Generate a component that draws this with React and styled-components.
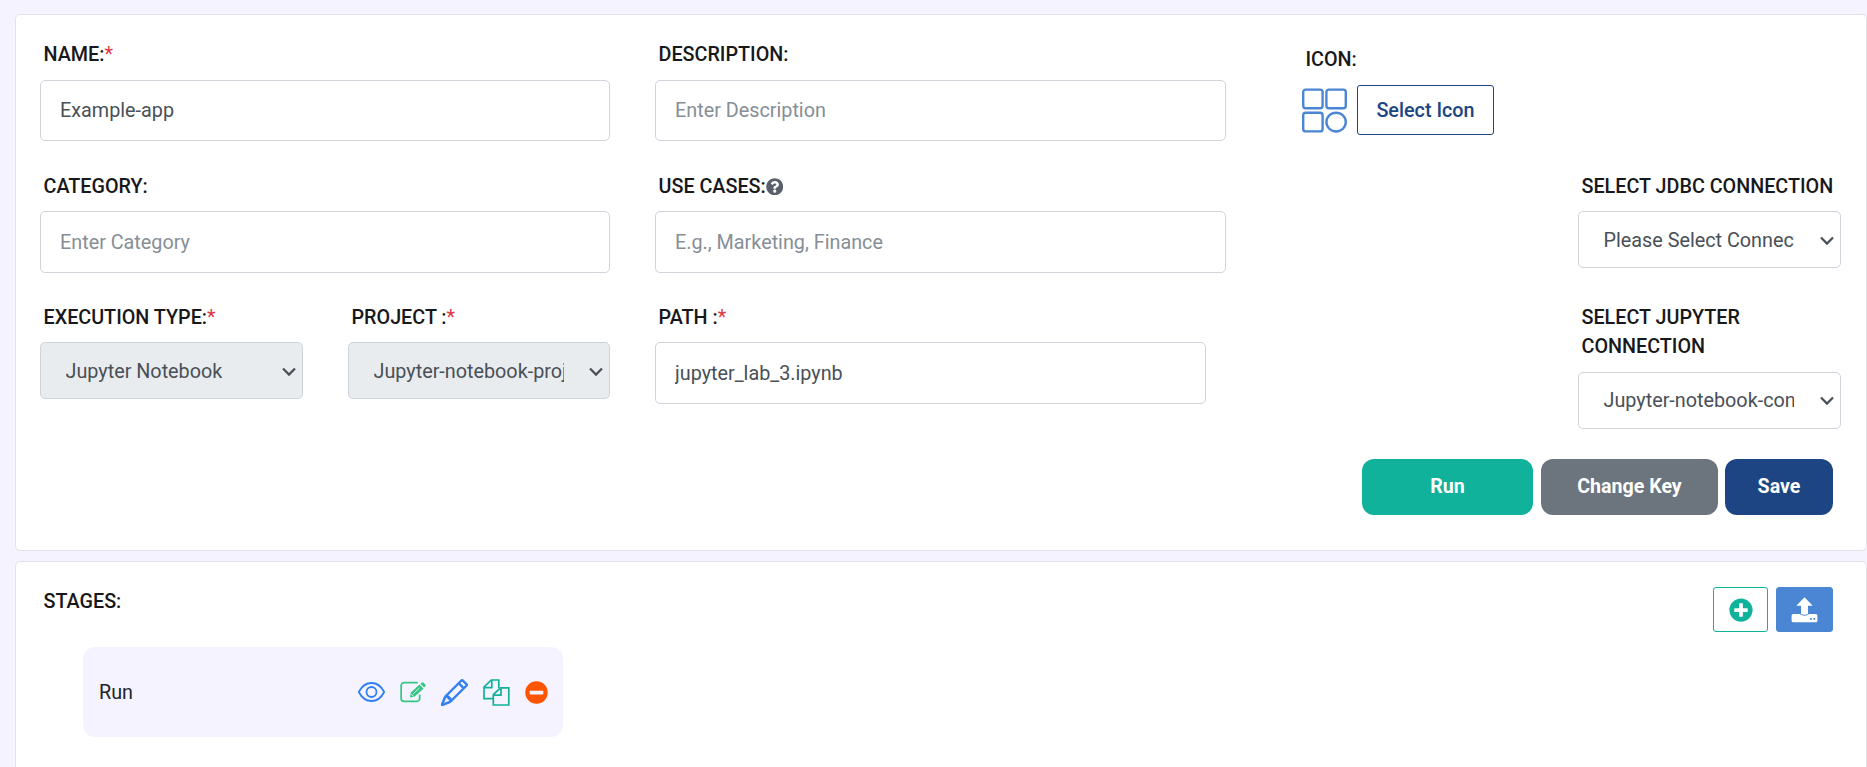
import React from 'react';
import styled, { createGlobalStyle } from 'styled-components';
import { BsPencil } from 'react-icons/bs';
import { FaQuestionCircle, FaPlusCircle } from 'react-icons/fa';

const GlobalStyle = createGlobalStyle`
  *, *::before, *::after { box-sizing: border-box; }
  body {
    margin: 0;
    background: #f5f3ff;
    color: #212529;
    font-family: Roboto, "Liberation Sans", sans-serif;
    font-size: 19.8px;
    line-height: 29px;
  }
  svg { display: block; flex: none; }
`;

const Page = styled.main`
  height: 767px;
  overflow: hidden;
  padding: 14px 0 0 15px;
  display: flex;
  flex-direction: column;
  gap: 10px;
`;

const Card = styled.section`
  flex: none;
  height: ${(p) => p.$height}px;
  padding: 25px 25px 0 24px;
  background: #fff;
  border: 1px solid #e2e2e6;
  border-radius: 5px;
`;

const FormRow = styled.div`
  display: grid;
  grid-template-columns: 570px 571px 262px 263px;
  column-gap: 45px;
  height: ${(p) => p.$height}px;
`;

const Pair = styled.div`
  display: grid;
  grid-template-columns: 263px 262px;
  justify-content: space-between;
`;

const Field = styled.div`
  grid-column: ${(p) => p.$column || 'auto'};
  margin-left: ${(p) => p.$indent || 0}px;
`;

const Label = styled.label`
  display: flex;
  align-items: center;
  padding-left: 3.5px;
  margin: ${(p) => p.$top ?? 0}px 0 ${(p) => p.$gap ?? 11}px;
  color: #18181b;
  font-size: 19.75px;
  font-weight: 500;

  svg { color: #5a6069; }
`;

const Required = styled.span`
  color: #dc3545;
  font-weight: 400;
`;

const Input = styled.input`
  display: block;
  width: ${(p) => p.$width || '100%'};
  height: ${(p) => p.$height || 62}px;
  padding: 0 19px;
  border: 1px solid #ced4da;
  border-radius: 5px;
  background: #fff;
  color: #495057;
  font: inherit;
  outline: none;

  &::placeholder { color: #868e96; opacity: 1; }
`;

const SelectBox = styled.div`
  display: flex;
  align-items: center;
  justify-content: space-between;
  height: 57px;
  padding: ${(p) => (p.$raised ? 0 : 2)}px 6px 0 24.500px;
  border: 1px solid #ced4da;
  border-radius: 5px;
  background: ${(p) => (p.$disabled ? '#e9ecef' : '#fff')};
  color: #495057;
`;

const SelectValue = styled.span`
  width: 190px;
  overflow: hidden;
  white-space: nowrap;
`;

const IconPicker = styled.div`
  display: flex;
  align-items: center;
  gap: 10px;
`;

const OutlineButton = styled.button`
  width: 137px;
  height: 50px;
  padding: 0;
  border: 1px solid #1d4583;
  border-radius: 3px;
  background: #fff;
  color: #1d4583;
  font: inherit;
  font-weight: 500;
`;

const Actions = styled.div`
  display: flex;
  justify-content: flex-end;
  gap: 7px;
  padding-right: 8px;
`;

const ActionButton = styled.button`
  width: ${(p) => p.$width}px;
  height: 56px;
  margin-right: ${(p) => p.$after || 0}px;
  padding: 0 0 2px;
  border: 0;
  border-radius: 12px;
  background: ${(p) => p.$color};
  color: #fff;
  font: inherit;
  font-weight: 700;
  font-size: 19.600px;
`;

const StagesHeader = styled.header`
  display: flex;
  justify-content: space-between;
  align-items: flex-start;
  padding-right: 8px;
`;

const Tools = styled.div`
  display: flex;
  gap: 8px;
`;

const ToolButton = styled.button`
  display: flex;
  align-items: center;
  justify-content: center;
  width: ${(p) => p.$width}px;
  height: 45px;
  padding: 0;
  border: 1px solid ${(p) => p.$border};
  border-radius: 3px;
  background: ${(p) => p.$fill};
  color: ${(p) => p.$ink};
`;

const Stage = styled.div`
  display: flex;
  align-items: center;
  justify-content: space-between;
  width: 480px;
  height: 90px;
  margin: 15px 0 0 43px;
  padding: 0 15px 0 16px;
  border-radius: 12px;
  background: #f5f3ff;
`;

const StageName = styled.span`
  padding-top: 1px;
`;

const StageIcons = styled.div`
  display: flex;
  align-items: center;
  gap: 15px;
`;

const Chevron = () => (
  <svg width="14" height="10" viewBox="0 0 14 10" fill="none" stroke="#495057" strokeWidth="2.2">
    <path d="M1 1.5 7 7.6l6-6.1" />
  </svg>
);

const AppsIcon = () => (
  <svg width="45" height="45" viewBox="0 0 45 45" fill="none" stroke="#4a86d3" strokeWidth="2.4">
    <rect x="1.2" y="1.6" width="19.4" height="18.6" rx="2.5" />
    <rect x="24.4" y="1.6" width="19.4" height="18.6" rx="2.5" />
    <rect x="1.2" y="24.8" width="19.4" height="18.6" rx="2.5" />
    <ellipse cx="34.1" cy="34.1" rx="9.7" ry="9.4" />
  </svg>
);

const EyeIcon = () => (
  <svg width="27" height="20" viewBox="0 0 27 20" fill="none" stroke="#2f7ff0" strokeWidth="1.8">
    <path d="M.8 10C3.7 4.4 8.300 1 13.500 1s9.800 3.400 12.700 9c-2.900 5.600-7.500 9-12.700 9S3.700 15.600.8 10Z" />
    <circle cx="13.500" cy="10" r="5" />
  </svg>
);

const EditIcon = () => (
  <svg width="26" height="22" viewBox="0 0 27 22">
    <path
      d="M18.500 1.300H4.200a3 3 0 0 0-3 3v13.400a3 3 0 0 0 3 3h13.200a3 3 0 0 0 3-3v-4.200"
      fill="none"
      stroke="#35c681"
      strokeWidth="1.800"
    />
    <path d="M10.300 16.800l1-5.200 9-8.300 4.100 4.200-9.100 8.300z" fill="#35c681" />
    <path d="M21.200 2.500l1.200-1.200q1-.8 2 0l1.900 1.900q.8 1-.1 1.900L25.100 6.400z" fill="#35c681" />
    <path d="M13.700 12.900l6.500-6M11.700 13.200l2.300 2.300" stroke="#f5f3ff" strokeWidth=".9" />
  </svg>
);

const CopyIcon = () => (
  <svg width="27" height="27" viewBox="0 0 27 27" fill="none" stroke="#11b19b" strokeWidth="1.700">
    <path d="M10.300 19.700H1V8.200L8.200 1h7.600v8" />
    <path d="M8.800 1v7.700H1" />
    <path d="M17.500 8.900h8.300V26H10.300V15.600z" />
    <path d="M18 8.900v7.200h-7.700" />
  </svg>
);

const MinusIcon = () => (
  <svg width="23" height="23" viewBox="0 0 23 23">
    <circle cx="11.500" cy="11.500" r="11.200" fill="#ff5500" />
    <rect x="4.700" y="9.700" width="13.600" height="3.700" rx=".6" fill="#f5f3ff" />
  </svg>
);

const UploadIcon = () => (
  <svg width="27" height="26" viewBox="0 0 27 26">
    <path
      fill="currentColor"
      fillRule="evenodd"
      d="M13.500.2 21.700 8.800h-4.700v8.200q-3.500 1.600-7 0V8.800H5.300zM2.200 17H8.600q4.900 3.500 9.800 0h6.400q1.600 0 1.600 1.500v5.200q0 1.500-1.600 1.500H2.200Q.6 25.200.6 23.700v-5.200Q.6 17 2.200 17zm16.700 4.100v1.700h1.800v-1.700zm3.500 0v1.700h1.800v-1.700z"
    />
  </svg>
);

const Select = ({ children, disabled, raised }) => (
  <SelectBox $disabled={disabled} $raised={raised}>
    <SelectValue>{children}</SelectValue>
    <Chevron />
  </SelectBox>
);

export default function App() {
  return (
    <Page>
      <GlobalStyle />
      <Card $height={537}>
        <FormRow $height={131}>
          <Field>
            <Label>NAME:<Required>*</Required></Label>
            <Input $height={61} defaultValue="Example-app" />
          </Field>
          <Field>
            <Label>DESCRIPTION:</Label>
            <Input $height={61} placeholder="Enter Description" />
          </Field>
          <Field $indent={31}>
            <Label $top={5}>ICON:</Label>
            <IconPicker>
              <AppsIcon />
              <OutlineButton>Select Icon</OutlineButton>
            </IconPicker>
          </Field>
        </FormRow>

        <FormRow $height={131}>
          <Field>
            <Label $top={1} $gap={10}>CATEGORY:</Label>
            <Input placeholder="Enter Category" />
          </Field>
          <Field>
            <Label $top={1} $gap={10}>USE CASES:<FaQuestionCircle size={17.500} /></Label>
            <Input placeholder="E.g., Marketing, Finance" />
          </Field>
          <Field $column={4}>
            <Label $top={1} $gap={10}>SELECT JDBC CONNECTION</Label>
            <Select>Please Select Connection</Select>
          </Field>
        </FormRow>

        <FormRow $height={157}>
          <Pair>
            <Field>
              <Label $top={1} $gap={10}>EXECUTION TYPE:<Required>*</Required></Label>
              <Select disabled>Jupyter Notebook</Select>
            </Field>
            <Field>
              <Label $top={1} $gap={10}>PROJECT :<Required>*</Required></Label>
              <Select disabled>Jupyter-notebook-project</Select>
            </Field>
          </Pair>
          <Field>
            <Label $top={1} $gap={10}>PATH :<Required>*</Required></Label>
            <Input $width="551px" defaultValue="jupyter_lab_3.ipynb" />
          </Field>
          <Field $column={4}>
            <Label $top={1} $gap={11}>SELECT JUPYTER CONNECTION</Label>
            <Select raised>Jupyter-notebook-connection</Select>
          </Field>
        </FormRow>

        <Actions>
          <ActionButton $width={171} $color="#10b29b" $after={1}>Run</ActionButton>
          <ActionButton $width={177} $color="#6c757d">Change Key</ActionButton>
          <ActionButton $width={108} $color="#1d4583">Save</ActionButton>
        </Actions>
      </Card>

      <Card $height={260}>
        <StagesHeader>
          <Label>STAGES:</Label>
          <Tools>
            <ToolButton $width={55} $border="#10b29b" $fill="#fff" $ink="#10b29b">
              <FaPlusCircle size={24} />
            </ToolButton>
            <ToolButton $width={57} $border="#4a86d3" $fill="#4a86d3" $ink="#fff">
              <UploadIcon />
            </ToolButton>
          </Tools>
        </StagesHeader>
        <Stage>
          <StageName>Run</StageName>
          <StageIcons>
            <EyeIcon />
            <EditIcon />
            <BsPencil size={27} color="#2f7ff0" strokeWidth={0.5} />
            <CopyIcon />
            <MinusIcon />
          </StageIcons>
        </Stage>
      </Card>
    </Page>
  );
}
